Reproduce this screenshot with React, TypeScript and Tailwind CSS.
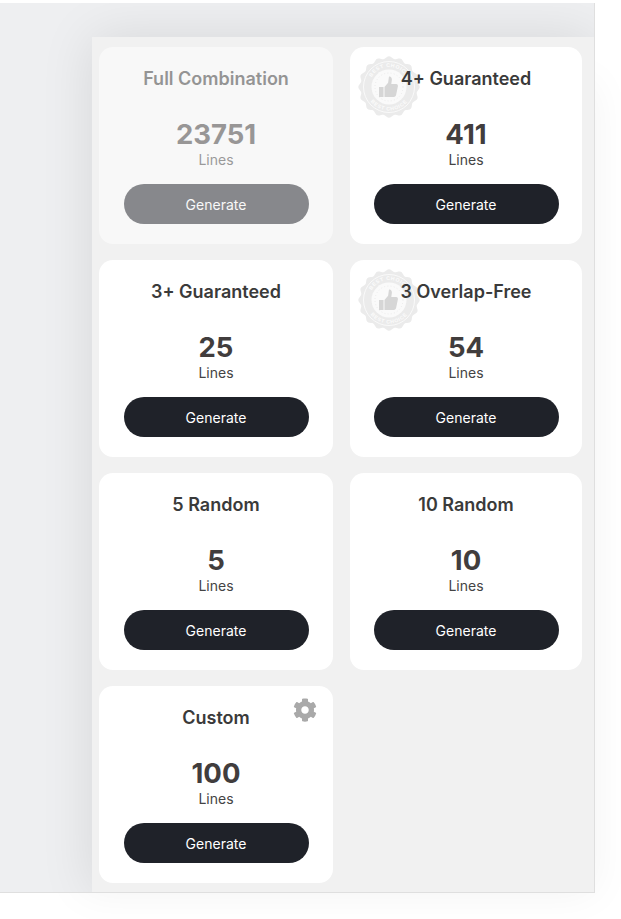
import React from "react";
import { FaCog } from "react-icons/fa";

function Badge() {
  const n = 16;
  const pts: string[] = [];
  const steps = 160;
  for (let i = 0; i < steps; i++) {
    const a = (i / steps) * Math.PI * 2;
    const r = 29.5 + 1.2 * Math.cos(a * n);
    pts.push(`${(31 + r * Math.cos(a)).toFixed(2)},${(31 + r * Math.sin(a)).toFixed(2)}`);
  }
  return (
    <svg viewBox="0 0 62 62" className="absolute left-[8px] top-[9px] w-[62px] h-[62px]">
      <polygon points={pts.join(" ")} fill="#ebebeb" />
      <circle cx="31" cy="31" r="25.5" fill="none" stroke="#fafafa" strokeWidth="1" />
      <circle cx="31" cy="31" r="17.5" fill="#fafafa" />
      <circle cx="31" cy="31" r="14" fill="none" stroke="#e2e2e2" strokeWidth="0.8" strokeDasharray="0.8 2.4" />
      <defs>
        <path id="badge-top" d="M11 31a20 20 0 0 1 40 0" />
        <path id="badge-bot" d="M7.5 31a23.5 23.5 0 0 0 47 0" />
      </defs>
      <text fontSize="5.2" fontWeight="700" fill="#fbfbfb" fontFamily="'Liberation Sans', sans-serif" letterSpacing="0.6">
        <textPath href="#badge-top" startOffset="50%" textAnchor="middle">BEST CHOICE</textPath>
      </text>
      <text fontSize="5.2" fontWeight="700" fill="#fbfbfb" fontFamily="'Liberation Sans', sans-serif" letterSpacing="0.6">
        <textPath href="#badge-bot" startOffset="50%" textAnchor="middle">BEST CHOICE</textPath>
      </text>
      <path
        d="M21 31h4.5v10H21zM26.5 31l3.6-4.2.9-6.3c1.9-.2 3 1.3 2.9 3.1l-.6 4.4h4.8c1.4 0 2.1 1.1 1.8 2.3l-1.8 8.7c-.3 1.1-1 1.9-2.2 1.9h-9.4z"
        fill="#d6d6d6"
      />
    </svg>
  );
}

function Card({
  title,
  count,
  muted,
  badge,
  gear,
}: {
  title: string;
  count: string;
  muted?: boolean;
  badge?: boolean;
  gear?: boolean;
}) {
  return (
    <div className={`relative h-[197px] rounded-[14px] bg-white flex flex-col items-center ${muted ? "opacity-50" : ""}`}>
      {badge && <Badge />}
      {gear && <FaCog className="absolute right-[16px] top-[12px] text-[24px] text-[#a9a9a9]" />}
      <div className="relative mt-[19px] h-[26px] text-[18px] leading-[26px] font-semibold text-[#3a3a3a]">{title}</div>
      <div className="mt-[25px] h-[34px] text-[27.5px] leading-[34px] font-bold text-[#413d3d]">{count}</div>
      <div className="h-[18px] text-[14px] leading-[18px] text-[#444444]">Lines</div>
      <button className="mt-[15px] w-[185px] h-[40px] rounded-full bg-[#1f2229] text-white text-[14px] font-normal">Generate</button>
    </div>
  );
}

export default function App() {
  return (
    <div className="w-[621px] h-[919px] bg-white overflow-hidden pt-[3px] font-['Inter',sans-serif]">
      <div className="w-[595px] h-[890px] bg-[#eeeff1] border-r border-b border-[#dfdfdf] shadow-[40px_40px_40px_-40px_rgba(0,0,0,0.05)]">
        <div className="w-full h-full overflow-hidden flex justify-end">
          <div className="w-[502px] h-[855px] mt-[34px] bg-[#f1f1f1] shadow-[0_0_50px_rgba(0,0,0,0.1)] pl-[7px] pt-[10px]">
            <div className="grid grid-cols-[234px_232px] gap-x-[17px] gap-y-[16px]">
              <Card title="Full Combination" count="23751" muted />
              <Card title="4+ Guaranteed" count="411" badge />
              <Card title="3+ Guaranteed" count="25" />
              <Card title="3 Overlap-Free" count="54" badge />
              <Card title="5 Random" count="5" />
              <Card title="10 Random" count="10" />
              <Card title="Custom" count="100" gear />
            </div>
          </div>
        </div>
      </div>
    </div>
  );
}
